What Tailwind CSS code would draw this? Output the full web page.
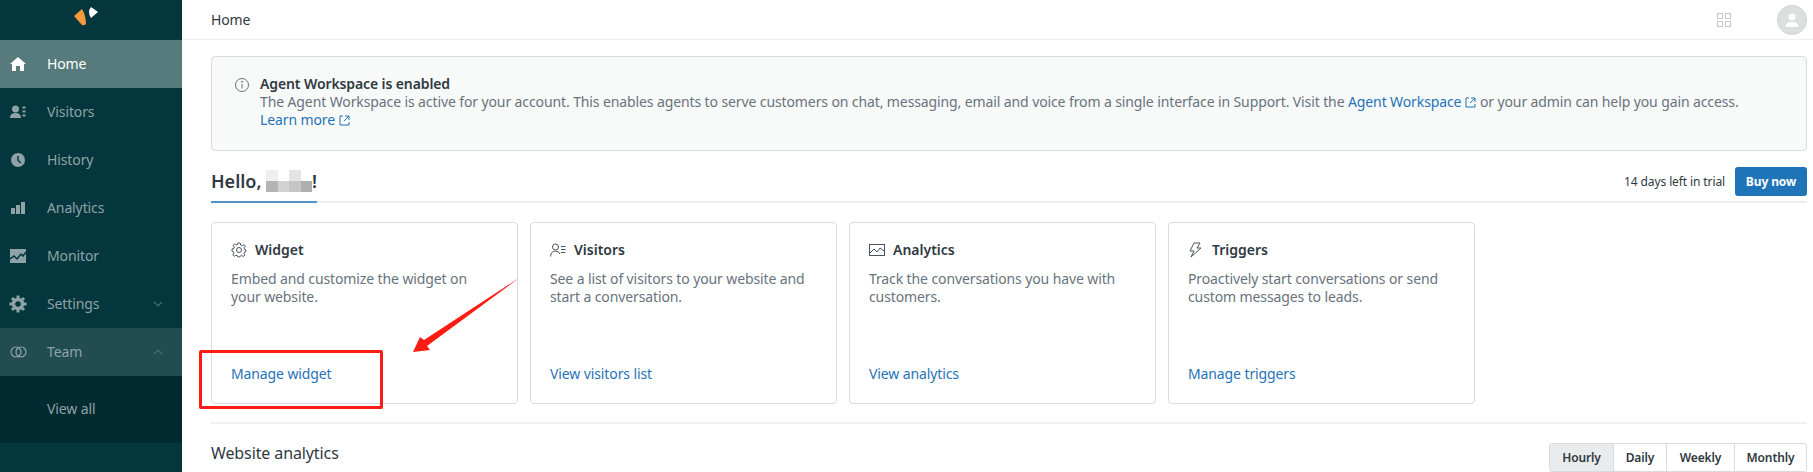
<!DOCTYPE html>
<html lang="en">
<head>
    <meta charset="UTF-8">
    <title>Home</title>
    <script src="https://cdn.jsdelivr.net/npm/@tailwindcss/browser@4"></script>
</head>
<body class="h-[472px] overflow-hidden bg-white font-['Noto_Sans',sans-serif] text-[14px] leading-[18px] tracking-[-0.11px] text-[#2f3941]">
    <div class="flex h-[472px]">
        <!-- Sidebar -->
        <aside class="w-[182px] shrink-0 bg-[#03363d] text-[#8fa3a6]">
            <div class="h-[40px] pl-[72px] pt-[2px]">
                <svg width="30" height="28" viewBox="0 0 30 28">
                    <path d="M2 14 L10 7 Q14 14 14 22 Q12 24 10 23 Z" fill="#f79a3e"/>
                    <path d="M19 5 L26 10 L19 16 Q15 10 19 5 Z" fill="#fff"/>
                </svg>
            </div>
            <nav>
                <a class="flex h-[48px] items-center bg-[#577b7c] text-white">
                    <span class="flex w-[47px] pl-[10px]">
                        <svg width="16" height="16" viewBox="0 0 16 16" fill="#fff"><path d="M8 1 L16 8 L14 8 L14 15 L10 15 L10 10 L6 10 L6 15 L2 15 L2 8 L0 8 Z"/></svg>
                    </span>
                    <span>Home</span>
                </a>
                <a class="flex h-[48px] items-center">
                    <span class="flex w-[47px] pl-[10px]">
                        <svg width="16" height="14" viewBox="0 0 16 14" fill="#8fa3a6"><circle cx="5.5" cy="4" r="3.5"/><path d="M0 13 Q0 8 5.5 8 Q11 8 11 13 Z"/><rect x="12.500" y="1.500" width="3" height="2"/><rect x="12.500" y="5.500" width="3" height="2"/><rect x="12.500" y="9.500" width="3" height="2"/></svg>
                    </span>
                    <span>Visitors</span>
                </a>
                <a class="flex h-[48px] items-center">
                    <span class="flex w-[47px] pl-[10px]">
                        <svg width="16" height="16" viewBox="0 0 16 16"><circle cx="8" cy="8" r="7" fill="#8fa3a6"/><path d="M8 4 V8.500 L11 11" stroke="#03363d" stroke-width="1.500" fill="none"/></svg>
                    </span>
                    <span>History</span>
                </a>
                <a class="flex h-[48px] items-center">
                    <span class="flex w-[47px] pl-[10px]">
                        <svg width="16" height="14" viewBox="0 0 16 14" fill="#8fa3a6"><rect x="1" y="7" width="4" height="6"/><rect x="6" y="4" width="4" height="9"/><rect x="11" y="1" width="4" height="12"/></svg>
                    </span>
                    <span>Analytics</span>
                </a>
                <a class="flex h-[48px] items-center">
                    <span class="flex w-[47px] pl-[10px]">
                        <svg width="16" height="14" viewBox="0 0 16 14"><rect width="16" height="14" fill="#8fa3a6"/><path d="M0 10 L4 7 L7 10 L11 5 L13 7 L16 3" stroke="#03363d" stroke-width="1.500" fill="none"/></svg>
                    </span>
                    <span>Monitor</span>
                </a>
                <a class="flex h-[48px] items-center">
                    <span class="flex w-[47px] pl-[9px]">
                        <svg width="18" height="18" viewBox="0 0 18 18" fill="none"><circle cx="9" cy="9" r="4.500" stroke="#8fa3a6" stroke-width="3.500"/><path d="M9 0.500 V3.500 M9 14.500 V17.500 M0.500 9 H3.500 M14.500 9 H17.500 M3 3 L5 5 M13 13 L15 15 M15 3 L13 5 M5 13 L3 15" stroke="#8fa3a6" stroke-width="3"/></svg>
                    </span>
                    <span>Settings</span>
                    <svg class="ml-auto mr-[19px]" width="10" height="6" viewBox="0 0 10 6" fill="none"><path d="M1 1 L5 5 L9 1" stroke="#4d7074" stroke-width="1.200"/></svg>
                </a>
                <a class="flex h-[48px] items-center bg-[#214c52]">
                    <span class="flex w-[47px] pl-[10px]">
                        <svg width="17" height="12" viewBox="0 0 17 12" fill="none" stroke="#8fa3a6" stroke-width="1.200"><circle cx="6" cy="6" r="5"/><circle cx="11" cy="6" r="5"/></svg>
                    </span>
                    <span>Team</span>
                    <svg class="ml-auto mr-[19px]" width="10" height="6" viewBox="0 0 10 6" fill="none"><path d="M1 5 L5 1 L9 5" stroke="#4d7074" stroke-width="1.200"/></svg>
                </a>
                <a class="flex h-[67px] items-center bg-[#022a31] pb-[2px] pl-[47px]">View all</a>
            </nav>
        </aside>

        <!-- Main -->
        <main class="relative min-w-0 flex-1">
            <header class="flex h-[40px] items-center border-b border-[#eff1f1] pl-[29px] pr-[6px]">
                <span>Home</span>
                <svg class="ml-auto mr-[46px]" width="14" height="14" viewBox="0 0 14 14" fill="none" stroke="#c2c8cc"><rect x="0.500" y="0.500" width="5" height="5"/><rect x="8.500" y="0.500" width="5" height="5"/><rect x="0.500" y="8.500" width="5" height="5"/><rect x="8.500" y="8.500" width="5" height="5"/></svg>
                <div class="flex h-[30px] w-[30px] items-center justify-center overflow-hidden rounded-full border border-[#cfd3d5] bg-[#dcdfe0]">
                    <svg width="16" height="16" viewBox="0 0 16 16" fill="#fff"><circle cx="8" cy="5" r="3.500"/><path d="M1.500 15 Q1.500 10 8 10 Q14.500 10 14.500 15 Z"/></svg>
                </div>
            </header>

            <div class="pl-[29px] pr-[6px] pt-[16px]">
                <!-- Notice -->
                <div class="flex h-[95px] rounded border border-[#d8dcde] bg-[#f8f9f9] pl-[22px] pt-[18px]">
                    <svg class="mr-[10px] mt-[2px] shrink-0" width="16" height="16" viewBox="0 0 16 16" fill="none" stroke="#68737d"><circle cx="8" cy="8" r="6.500"/><path d="M8 7 V11.500"/><circle cx="8" cy="4.800" r="0.500" fill="#68737d"/></svg>
                    <div>
                        <div class="font-semibold">Agent Workspace is enabled</div>
                        <div class="text-[#68737d]">The Agent Workspace is active for your account. This enables agents to serve customers on chat, messaging, email and voice from a single interface in Support. Visit the <a class="text-[#1f73b7]">Agent Workspace<svg class="mb-[1px] ml-[4px] inline" width="11" height="11" viewBox="0 0 11 11" fill="none" stroke="#1f73b7"><path d="M4 1 H1 V10 H10 V7 M6 1 H10 V5 M10 1 L5 6"/></svg></a> or your admin can help you gain access.</div>
                        <a class="text-[#1f73b7]">Learn more<svg class="mb-[1px] ml-[4px] inline" width="11" height="11" viewBox="0 0 11 11" fill="none" stroke="#1f73b7"><path d="M4 1 H1 V10 H10 V7 M6 1 H10 V5 M10 1 L5 6"/></svg></a>
                    </div>
                </div>

                <!-- Hello row -->
                <div class="mt-[14px] flex h-[38px] items-start justify-between border-b-2 border-[#eceeee]">
                    <div class="flex h-[38px] w-[106px] items-center border-b-2 border-[#5293c7] pb-[4px] text-[18px] font-semibold tracking-normal">
                        <span>Hello,</span>
                        <span class="ml-[5px] grid h-[22px] w-[46px] grid-cols-4 grid-rows-2">
                            <span class="bg-[#efefef]"></span>
                            <span></span>
                            <span class="bg-[#e4e4e4]"></span>
                            <span></span>
                            <span class="bg-[#b5b3b3]"></span>
                            <span class="bg-[#d2d2d2]"></span>
                            <span class="bg-[#c6c5c5]"></span>
                            <span class="bg-[#b0afaf]"></span>
                        </span>
                        <span>!</span>
                    </div>
                    <div class="flex items-center gap-[10px] pt-[2px]">
                        <span class="text-[12px]">14 days left in trial</span>
                        <a class="flex h-[29px] w-[72px] items-center justify-center rounded-[3px] bg-[#1f73b7] text-[12px] font-bold text-white">Buy now</a>
                    </div>
                </div>

                <!-- Cards -->
                <div class="mt-[19px] flex gap-[12px]">
                    <section class="flex h-[182px] w-[307px] flex-col rounded border border-[#d8dcde] pl-[19px] pr-[22px] pt-[18px]">
                        <h3 class="flex items-center font-semibold tracking-normal">
                            <svg class="mr-[8px]" width="16" height="16" viewBox="0 0 16 16" fill="none" stroke="#49545c"><circle cx="8" cy="8" r="2.500"/><path d="M6.800 1 H9.200 L9.700 3 L11.300 3.700 L13 2.600 L14.400 4.300 L13 5.800 L13.500 7.300 L15 8 V9.500 L13.300 10.200 L12.900 11.500 L13.800 13.300 L12.100 14.500 L10.500 13.300 L9.200 14 L8.800 15 H7 L6.500 13.800 L5 13.200 L3.400 14.300 L1.800 12.800 L3 11.100 L2.400 9.800 L1 9.200 V7 L2.800 6.400 L3.200 5 L2.100 3.400 L3.700 2 L5.200 3.100 L6.500 2.600 Z"/></svg>
                            Widget
                        </h3>
                        <p class="mt-[11px] text-[#68737d]">Embed and customize the widget on your website.</p>
                        <a class="mt-auto mb-[20px] text-[#1f73b7]">Manage widget</a>
                    </section>
                    <section class="flex h-[182px] w-[307px] flex-col rounded border border-[#d8dcde] pl-[19px] pr-[22px] pt-[18px]">
                        <h3 class="flex items-center font-semibold tracking-normal">
                            <svg class="mr-[8px]" width="16" height="14" viewBox="0 0 16 14" fill="none" stroke="#49545c"><circle cx="5.500" cy="4" r="3"/><path d="M0.500 13.500 Q1 8 5.500 8 Q9 8 10 11 M11 3.500 H15.500 M11 6.500 H15.500 M11 9.500 H15.500"/></svg>
                            Visitors
                        </h3>
                        <p class="mt-[11px] text-[#68737d]">See a list of visitors to your website and start a conversation.</p>
                        <a class="mt-auto mb-[20px] text-[#1f73b7]">View visitors list</a>
                    </section>
                    <section class="flex h-[182px] w-[307px] flex-col rounded border border-[#d8dcde] pl-[19px] pr-[22px] pt-[18px]">
                        <h3 class="flex items-center font-semibold tracking-normal">
                            <svg class="mr-[8px]" width="16" height="14" viewBox="0 0 16 14" fill="none" stroke="#49545c"><rect x="0.500" y="1.500" width="15" height="11"/><path d="M1 10 L5 6 L8 9 L11 5 L15 8"/></svg>
                            Analytics
                        </h3>
                        <p class="mt-[11px] text-[#68737d]">Track the conversations you have with customers.</p>
                        <a class="mt-auto mb-[20px] text-[#1f73b7]">View analytics</a>
                    </section>
                    <section class="flex h-[182px] w-[307px] flex-col rounded border border-[#d8dcde] pl-[19px] pr-[22px] pt-[18px]">
                        <h3 class="flex items-center font-semibold tracking-normal">
                            <svg class="mr-[10px]" width="14" height="16" viewBox="0 0 14 16" fill="none" stroke="#49545c"><path d="M6 1 H12 L9 6 H13 L3 15 L6 9 H2 Z"/></svg>
                            Triggers
                        </h3>
                        <p class="mt-[11px] text-[#68737d]">Proactively start conversations or send custom messages to leads.</p>
                        <a class="mt-auto mb-[20px] text-[#1f73b7]">Manage triggers</a>
                    </section>
                </div>

                <!-- Website analytics -->
                <div class="mt-[18px] flex justify-between border-t-2 border-[#eff1f1] pt-[19px]">
                    <h2 class="-mt-[1px] text-[16px] leading-[22px]">Website analytics</h2>
                    <div class="flex h-[29px] overflow-hidden rounded-[3px] border border-[#d8dcde] text-[12px] font-semibold">
                        <span class="flex w-[63px] items-center justify-center bg-[#e9ebed]">Hourly</span>
                        <span class="flex w-[53px] items-center justify-center border-l border-[#d8dcde]">Daily</span>
                        <span class="flex w-[68px] items-center justify-center border-l border-[#d8dcde]">Weekly</span>
                        <span class="flex w-[72px] items-center justify-center border-l border-[#d8dcde]">Monthly</span>
                    </div>
                </div>
            </div>

            <!-- Red annotation drawn over the page -->
            <div class="absolute left-[17px] top-[350px] h-[59px] w-[184px] rounded-[2px] border-[3px] border-[#fc1c14]"></div>
            <svg class="absolute left-[220px] top-[270px]" width="125" height="90" viewBox="0 0 125 90">
                <path d="M117 8 L22 70 L18 67 L11 82 L28 80 L25 76 Z" fill="#fc1c14"/>
            </svg>
        </main>
    </div>
</body>
</html>
